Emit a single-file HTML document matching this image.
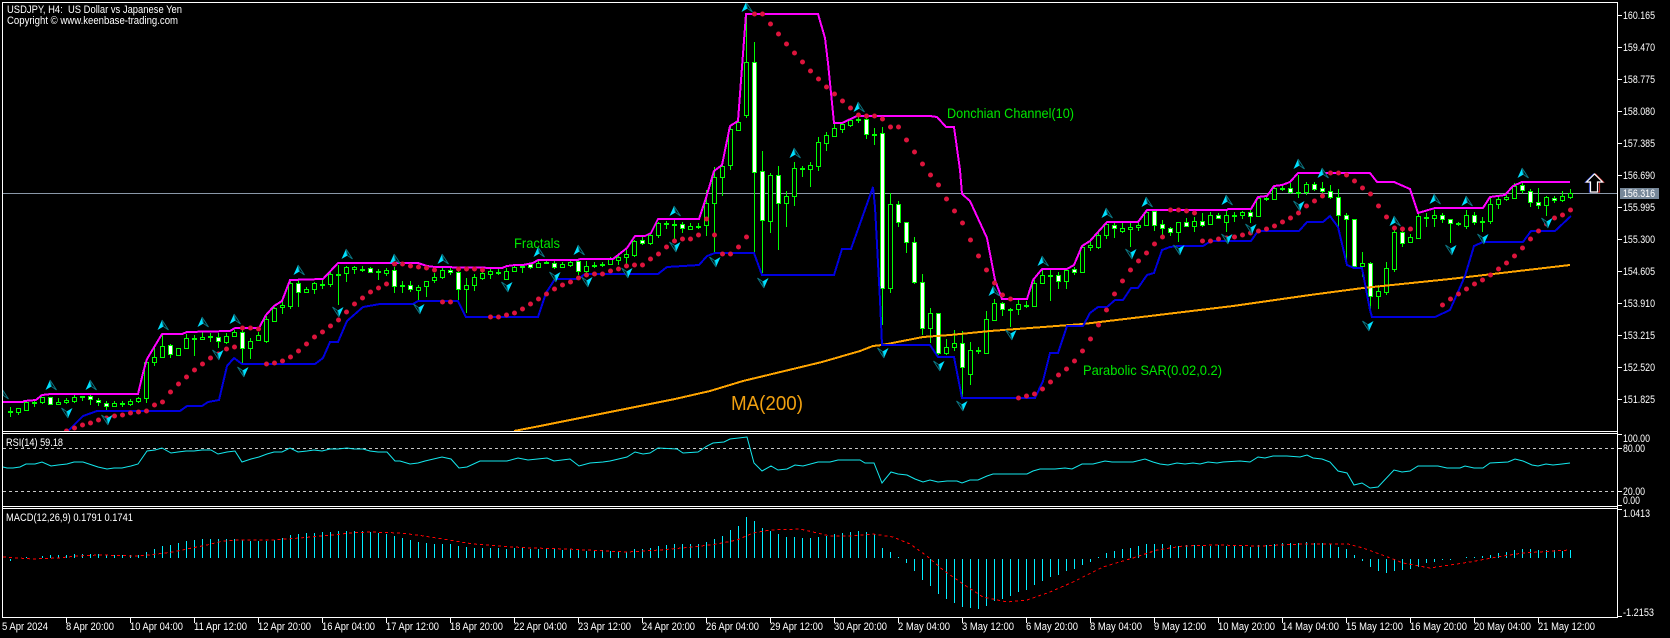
<!DOCTYPE html>
<html lang="en"><head><meta charset="utf-8"><title>USDJPY H4</title>
<style>
html,body{margin:0;padding:0;background:#000;width:1670px;height:638px;overflow:hidden}
svg{display:block}
text{font-family:"Liberation Sans",sans-serif;font-size:11px;fill:#fff}
.g{font-size:14px;fill:#00e800}
</style></head><body>
<svg xmlns="http://www.w3.org/2000/svg" width="1670" height="638" viewBox="0 0 1670 638">
<defs>
<clipPath id="m"><rect x="3" y="3" width="1614" height="428"/></clipPath>
<g id="u"><path d="M-1-5-5.5 5 .5 1.5z" fill="#00e0ff"/><path d="M-1-5 .5 1.5 5.5 5z" fill="#000" stroke="#0b7480"/></g>
<g id="d"><use href="#u" transform="rotate(180)"/></g>
</defs>
<rect width="1670" height="638" fill="#000"/>
<!-- panel frames -->
<g fill="none" stroke="#fff" stroke-width="1" shape-rendering="crispEdges">
<path d="M2.5 2.5H1617.5V617.5H2.5ZM2.5 431.5H1617.5M2.5 433.5H1617.5M2.5 506.5H1617.5M2.5 508.5H1617.5"/>
<path d="M1617 15.500h5M1617 47.500h5M1617 79.500h5M1617 111.500h5M1617 143.500h5M1617 175.500h5M1617 207.500h5M1617 239.500h5M1617 271.500h5M1617 303.500h5M1617 335.500h5M1617 367.500h5M1617 399.500h5M1617 434.500h5M1617 448.500h5M1617 491.500h5M1617 505.500h5M1617 509.500h5M1617 616.500h5"/>
<path d="M66.500 618v5M130.500 618v5M194.500 618v5M258.500 618v5M322.500 618v5M386.500 618v5M450.500 618v5M514.500 618v5M578.500 618v5M642.500 618v5M706.500 618v5M770.500 618v5M834.500 618v5M898.500 618v5M962.500 618v5M1026.500 618v5M1090.500 618v5M1154.500 618v5M1218.500 618v5M1282.500 618v5M1346.500 618v5M1410.500 618v5M1474.500 618v5M1538.500 618v5"/>
</g>
<!-- current price line -->
<path d="M3 193.500H1617" stroke="#8a98a8" stroke-width="1" shape-rendering="crispEdges"/>
<g clip-path="url(#m)">
<!-- wicks -->
<path shape-rendering="crispEdges" fill="none" stroke="#0f0" stroke-width="1" d="M10.500 407V417M18.500 408V415M26.500 402V410M34.500 401V407M42.500 397V404M50.500 397V405M58.500 398V405M66.500 398V404M74.500 395V403M82.500 396V401M90.500 395V405M98.500 398V406M106.500 401V410M114.500 401V407M122.500 401V407M130.500 399V406M138.500 397V403M146.500 360V403M154.500 348V366M162.500 335V358M170.500 344V358M178.500 348V356M186.500 334V348M194.500 335V356M202.500 332V340M210.500 333V342M218.500 333V348M226.500 333V344M234.500 330V336M242.500 330V363M250.500 338V359M258.500 332V341M266.500 316V343M274.500 307V322M282.500 301V314M290.500 280V309M298.500 280V307M306.500 287V293M314.500 282V294M322.500 280V289M330.500 272V287M338.500 265V305M346.500 266V282M354.500 266V274M362.500 266V272M370.500 267V273M378.500 269V280M386.500 268V276M394.500 267V293M402.500 281V293M410.500 281V292M418.500 285V302M426.500 281V297M434.500 273V283M442.500 268V279M450.500 268V275M458.500 268V300M466.500 278V313M474.500 274V291M482.500 272V280M490.500 269V279M498.500 269V275M506.500 268V280M514.500 264V272M522.500 264V273M530.500 263V269M538.500 261V268M546.500 260V264M554.500 261V269M562.500 262V268M570.500 260V267M578.500 259V275M586.500 261V274M594.500 262V268M602.500 262V267M610.500 257V264M618.500 255V265M626.500 248V265M634.500 240V257M642.500 237V245M650.500 233V245M658.500 222V238M666.500 221V229M674.500 220V240M682.500 222V233M690.500 223V230M698.500 223V229M706.500 190V236M714.500 167V253M722.500 163V196M730.500 125V170M738.500 120V130M746.500 14V118M754.500 42V253M762.500 151V273M770.500 173V233M778.500 166V250M786.500 191V227M794.500 162V206M802.500 166V177M810.500 162V187M818.500 137V171M826.500 132V151M834.500 123V137M842.500 123V133M850.500 118V127M858.500 115V123M866.500 117V139M874.500 128V145M882.500 127V325M890.500 193V293M898.500 201V227M906.500 222V253M914.500 237V284M922.500 274V335M930.500 308V343M938.500 313V355M946.500 339V355M954.500 330V351M962.500 331V397M970.500 342V385M978.500 347V354M986.500 311V354M994.500 299V321M1002.500 302V316M1010.500 308V327M1018.500 300V315M1026.500 301V308M1034.500 280V307M1042.500 270V284M1050.500 270V301M1058.500 272V289M1066.500 269V289M1074.500 267V275M1082.500 245V273M1090.500 240V251M1098.500 230V249M1106.500 222V239M1114.500 222V238M1122.500 223V233M1130.500 222V247M1138.500 221V231M1146.500 210V225M1154.500 210V231M1162.500 220V239M1170.500 227V236M1178.500 222V242M1186.500 218V227M1194.500 217V232M1202.500 213V227M1210.500 212V225M1218.500 213V219M1226.500 211V232M1234.500 212V222M1242.500 211V219M1250.500 208V223M1258.500 197V216M1266.500 195V201M1274.500 186V200M1282.500 186V191M1290.500 183V194M1298.500 175V198M1306.500 182V195M1314.500 182V191M1322.500 182V193M1330.500 185V199M1338.500 189V227M1346.500 213V262M1354.500 219V267M1362.500 252V277M1370.500 262V310M1378.500 285V309M1386.500 262V295M1394.500 227V272M1402.500 228V247M1410.500 234V243M1418.500 213V239M1426.500 213V227M1434.500 210V227M1442.500 213V223M1450.500 219V243M1458.500 222V226M1466.500 210V229M1474.500 212V225M1482.500 217V232M1490.500 198V224M1498.500 197V209M1506.500 195V201M1514.500 183V198M1522.500 182V194M1530.500 189V207M1538.500 188V209M1546.500 196V216M1554.500 196V203M1562.500 191V202M1570.500 189V199"/>
<!-- bull bodies -->
<path shape-rendering="crispEdges" fill="#000" stroke="#0f0" stroke-width="1" d="M8.500 411.500h4v1h-4zM16.500 408.500h4v4h-4zM24.500 402.500h4v8h-4zM32.500 402.500h4v1h-4zM40.500 397.500h4v5h-4zM56.500 402.500h4v2h-4zM64.500 400.500h4v2h-4zM72.500 397.500h4v4h-4zM80.500 396.500h4v1h-4zM112.500 403.500h4v3h-4zM120.500 403.500h4v1h-4zM128.500 401.500h4v3h-4zM136.500 398.500h4v3h-4zM144.500 362.500h4v36h-4zM152.500 357.500h4v5h-4zM160.500 346.500h4v11h-4zM176.500 348.500h4v7h-4zM184.500 338.500h4v10h-4zM192.500 338.500h4v1h-4zM200.500 337.500h4v2h-4zM208.500 336.500h4v1h-4zM224.500 336.500h4v6h-4zM232.500 332.500h4v4h-4zM248.500 341.500h4v7h-4zM256.500 335.500h4v5h-4zM264.500 319.500h4v22h-4zM272.500 308.500h4v13h-4zM280.500 305.500h4v2h-4zM288.500 283.500h4v23h-4zM304.500 289.500h4v3h-4zM312.500 283.500h4v6h-4zM320.500 284.500h4v1h-4zM328.500 274.500h4v10h-4zM336.500 274.500h4v1h-4zM344.500 267.500h4v6h-4zM352.500 267.500h4v2h-4zM360.500 269.500h4v1h-4zM376.500 271.500h4v1h-4zM384.500 270.500h4v3h-4zM400.500 285.500h4v1h-4zM416.500 287.500h4v3h-4zM424.500 281.500h4v5h-4zM432.500 277.500h4v3h-4zM440.500 270.500h4v7h-4zM464.500 285.500h4v4h-4zM472.500 277.500h4v8h-4zM480.500 273.500h4v5h-4zM488.500 271.500h4v3h-4zM496.500 272.500h4v1h-4zM504.500 271.500h4v8h-4zM512.500 267.500h4v4h-4zM520.500 266.500h4v1h-4zM536.500 263.500h4v4h-4zM544.500 262.500h4v1h-4zM560.500 264.500h4v3h-4zM568.500 262.500h4v3h-4zM584.500 266.500h4v5h-4zM592.500 265.500h4v1h-4zM600.500 264.500h4v1h-4zM608.500 259.500h4v5h-4zM616.500 257.500h4v3h-4zM624.500 254.500h4v3h-4zM632.500 241.500h4v14h-4zM648.500 235.500h4v8h-4zM656.500 223.500h4v12h-4zM664.500 223.500h4v1h-4zM672.500 224.500h4v1h-4zM688.500 226.500h4v3h-4zM696.500 226.500h4v1h-4zM704.500 203.500h4v22h-4zM712.500 177.500h4v26h-4zM720.500 166.500h4v11h-4zM728.500 129.500h4v36h-4zM736.500 122.500h4v8h-4zM744.500 62.500h4v53h-4zM768.500 175.500h4v46h-4zM784.500 196.500h4v7h-4zM792.500 168.500h4v28h-4zM800.500 168.500h4v1h-4zM808.500 165.500h4v4h-4zM816.500 142.500h4v24h-4zM824.500 135.500h4v8h-4zM832.500 128.500h4v8h-4zM840.500 124.500h4v5h-4zM848.500 120.500h4v5h-4zM856.500 119.500h4v1h-4zM872.500 134.500h4v1h-4zM888.500 204.500h4v84h-4zM928.500 313.500h4v15h-4zM944.500 347.500h4v6h-4zM952.500 343.500h4v4h-4zM968.500 350.500h4v24h-4zM976.500 350.500h4v1h-4zM984.500 319.500h4v34h-4zM992.500 303.500h4v17h-4zM1008.500 309.500h4v1h-4zM1016.500 304.500h4v5h-4zM1024.500 305.500h4v1h-4zM1032.500 283.500h4v23h-4zM1040.500 275.500h4v8h-4zM1048.500 275.500h4v1h-4zM1064.500 270.500h4v11h-4zM1080.500 247.500h4v25h-4zM1088.500 245.500h4v2h-4zM1096.500 235.500h4v12h-4zM1104.500 224.500h4v11h-4zM1120.500 228.500h4v3h-4zM1128.500 227.500h4v2h-4zM1136.500 225.500h4v2h-4zM1144.500 212.500h4v13h-4zM1176.500 222.500h4v10h-4zM1192.500 221.500h4v5h-4zM1208.500 215.500h4v9h-4zM1224.500 215.500h4v7h-4zM1232.500 215.500h4v1h-4zM1240.500 212.500h4v3h-4zM1256.500 198.500h4v18h-4zM1264.500 198.500h4v1h-4zM1272.500 188.500h4v11h-4zM1280.500 188.500h4v1h-4zM1296.500 192.500h4v1h-4zM1304.500 184.500h4v8h-4zM1360.500 263.500h4v3h-4zM1376.500 291.500h4v5h-4zM1384.500 268.500h4v24h-4zM1392.500 232.500h4v37h-4zM1408.500 237.500h4v5h-4zM1416.500 216.500h4v22h-4zM1424.500 217.500h4v1h-4zM1432.500 215.500h4v3h-4zM1456.500 223.500h4v1h-4zM1464.500 215.500h4v11h-4zM1480.500 221.500h4v1h-4zM1488.500 204.500h4v17h-4zM1496.500 199.500h4v5h-4zM1504.500 197.500h4v2h-4zM1512.500 186.500h4v12h-4zM1544.500 197.500h4v8h-4zM1560.500 196.500h4v4h-4zM1568.500 193.500h4v4h-4z"/>
<!-- bear bodies -->
<path shape-rendering="crispEdges" fill="#fff" stroke="#0f0" stroke-width="1" d="M48.500 397.500h4v7h-4zM88.500 396.500h4v3h-4zM96.500 400.500h4v2h-4zM104.500 403.500h4v3h-4zM168.500 345.500h4v9h-4zM216.500 337.500h4v4h-4zM240.500 332.500h4v16h-4zM296.500 283.500h4v9h-4zM368.500 268.500h4v4h-4zM392.500 270.500h4v16h-4zM408.500 285.500h4v4h-4zM448.500 270.500h4v2h-4zM456.500 272.500h4v17h-4zM528.500 264.500h4v3h-4zM552.500 263.500h4v4h-4zM576.500 261.500h4v10h-4zM640.500 240.500h4v3h-4zM680.500 224.500h4v4h-4zM752.500 62.500h4v110h-4zM760.500 171.500h4v49h-4zM776.500 175.500h4v28h-4zM864.500 119.500h4v15h-4zM880.500 133.500h4v155h-4zM896.500 204.500h4v18h-4zM904.500 222.500h4v20h-4zM912.500 242.500h4v40h-4zM920.500 282.500h4v46h-4zM936.500 313.500h4v40h-4zM960.500 343.500h4v24h-4zM1000.500 303.500h4v6h-4zM1056.500 275.500h4v6h-4zM1072.500 269.500h4v3h-4zM1112.500 225.500h4v3h-4zM1152.500 211.500h4v14h-4zM1160.500 224.500h4v4h-4zM1168.500 228.500h4v4h-4zM1184.500 222.500h4v4h-4zM1200.500 221.500h4v4h-4zM1216.500 215.500h4v3h-4zM1248.500 212.500h4v4h-4zM1288.500 188.500h4v4h-4zM1312.500 184.500h4v5h-4zM1320.500 188.500h4v3h-4zM1328.500 191.500h4v6h-4zM1336.500 197.500h4v18h-4zM1344.500 215.500h4v4h-4zM1352.500 219.500h4v47h-4zM1368.500 263.500h4v33h-4zM1400.500 232.500h4v11h-4zM1440.500 215.500h4v4h-4zM1448.500 219.500h4v4h-4zM1472.500 215.500h4v7h-4zM1520.500 185.500h4v5h-4zM1528.500 191.500h4v11h-4zM1536.500 202.500h4v3h-4zM1552.500 198.500h4v2h-4z"/>
<!-- MA200 -->
<polyline fill="none" stroke="#ffa500" stroke-width="2" shape-rendering="crispEdges" points="514,431 540,426 600,414 675,399 710,391 743,381 822,362 860,351 873,346 882,345 923,337 950,335 990,331 1083,324 1150,316 1233,306 1310,295 1363,288 1450,279 1570,265"/>
<!-- Donchian lower -->
<polyline fill="none" stroke="#0000dd" stroke-width="2" shape-rendering="crispEdges" points="68,431 83,416 97,411 180,411 187,406 202,406 208,402 219,400 227,366 234,358 242,364 315,364 323,358 330,342 338,342 347,321 363,307 380,304 413,304 418,301 458,301 466,317 538,317 546,293 555,279 578,279 585,274 658,274 667,267 699,265 707,256 715,253 754,253 762,275 834,275 842,249 851,249 873,187 875,207 880,300 882,345 930,345 938,357 954,357 962,398 1035,398 1043,381 1050,353 1058,353 1067,326 1083,326 1090,313 1098,307 1107,307 1115,300 1123,300 1131,288 1138,288 1147,275 1154,273 1162,250 1170,247 1178,246 1203,246 1211,241 1251,241 1258,231 1299,231 1307,222 1323,222 1330,216 1338,227 1347,265 1354,268 1362,268 1370,310 1372,317 1435,317 1450,310 1465,276 1474,246 1483,242 1523,242 1531,231 1555,231 1571,216"/>
<!-- Donchian upper -->
<polyline fill="none" stroke="#ff00ff" stroke-width="2" shape-rendering="crispEdges" points="3,402 23,402 24,401 36,400 42,395 51,394 138,394 143,373 147,359 162,334 182,334 187,332 230,331 235,328 259,328 266,315 274,306 282,301 290,280 323,279 338,263 418,263 427,266 435,267 502,268 507,266 515,265 523,265 533,263 538,260 578,260 580,259 613,259 627,248 635,236 645,236 651,233 658,219 699,219 706,198 714,171 722,165 730,126 738,121 742,67 746,14 818,14 825,38 828,63 834,123 842,123 857,116 930,116 937,117 946,127 954,127 960,170 962,194 970,201 987,238 995,280 1002,299 1027,299 1033,280 1042,269 1067,269 1074,265 1082,246 1090,241 1107,222 1138,222 1147,210 1227,210 1228,209 1251,209 1258,197 1267,196 1274,186 1282,185 1290,182 1298,173 1370,173 1377,182 1394,182 1410,189 1418,213 1435,208 1483,208 1490,197 1505,195 1513,186 1522,182 1570,182"/>
<!-- Parabolic SAR -->
<path fill="none" stroke="#dc143c" stroke-width="5" stroke-linecap="round" d="M66.500 431h.01M74.500 428h.01M82.500 425h.01M90.500 423h.01M98.500 420h.01M106.500 418h.01M114.500 416h.01M122.500 415h.01M130.500 413h.01M138.500 412h.01M146.500 411h.01M154.500 405h.01M162.500 402h.01M170.500 392h.01M178.500 384h.01M186.500 377h.01M194.500 370h.01M202.500 364h.01M210.500 358h.01M218.500 354h.01M226.500 349h.01M234.500 347h.01M242.500 328h.01M250.500 328h.01M258.500 329h.01M266.500 364h.01M274.500 363h.01M282.500 361h.01M290.500 357h.01M298.500 351h.01M306.500 344h.01M314.500 337h.01M322.500 332h.01M330.500 326h.01M338.500 320h.01M346.500 312h.01M354.500 304h.01M362.500 298h.01M370.500 292h.01M378.500 288h.01M386.500 284h.01M394.500 264h.01M402.500 264h.01M410.500 266h.01M418.500 267h.01M426.500 268h.01M434.500 270h.01M442.500 302h.01M450.500 302h.01M458.500 269h.01M466.500 269h.01M474.500 269h.01M482.500 270h.01M490.500 317h.01M498.500 317h.01M506.500 315h.01M514.500 313h.01M522.500 309h.01M530.500 304h.01M538.500 299h.01M546.500 294h.01M554.500 289h.01M562.500 285h.01M570.500 282h.01M578.500 278h.01M586.500 275h.01M594.500 274h.01M602.500 274h.01M610.500 271h.01M618.500 269h.01M626.500 266h.01M634.500 265h.01M642.500 265h.01M650.500 259h.01M658.500 254h.01M666.500 247h.01M674.500 241h.01M682.500 239h.01M690.500 239h.01M698.500 235h.01M706.500 219h.01M714.500 235h.01M722.500 254h.01M730.500 254h.01M738.500 247h.01M746.500 237h.01M754.500 14h.01M762.500 14h.01M770.500 24h.01M778.500 34h.01M786.500 44h.01M794.500 53h.01M802.500 62h.01M810.500 71h.01M818.500 79h.01M826.500 87h.01M834.500 94h.01M842.500 101h.01M850.500 108h.01M858.500 115h.01M866.500 116h.01M874.500 116h.01M882.500 119h.01M890.500 127h.01M898.500 127h.01M906.500 140h.01M914.500 152h.01M922.500 164h.01M930.500 175h.01M938.500 185h.01M946.500 199h.01M954.500 211h.01M962.500 223h.01M970.500 240h.01M978.500 256h.01M986.500 270h.01M994.500 283h.01M1002.500 295h.01M1010.500 299h.01M1018.500 398h.01M1026.500 396h.01M1034.500 394h.01M1042.500 389h.01M1050.500 382h.01M1058.500 375h.01M1066.500 369h.01M1074.500 361h.01M1082.500 351h.01M1090.500 339h.01M1098.500 325h.01M1106.500 310h.01M1114.500 294h.01M1122.500 281h.01M1130.500 270h.01M1138.500 261h.01M1146.500 253h.01M1154.500 244h.01M1162.500 237h.01M1170.500 210h.01M1178.500 210h.01M1186.500 211h.01M1194.500 213h.01M1202.500 241h.01M1210.500 241h.01M1218.500 239h.01M1226.500 238h.01M1234.500 237h.01M1242.500 235h.01M1250.500 233h.01M1258.500 231h.01M1266.500 229h.01M1274.500 226h.01M1282.500 222h.01M1290.500 218h.01M1298.500 213h.01M1306.500 206h.01M1314.500 201h.01M1322.500 196h.01M1330.500 173h.01M1338.500 173h.01M1346.500 175h.01M1354.500 181h.01M1362.500 188h.01M1370.500 194h.01M1378.500 206h.01M1386.500 217h.01M1394.500 228h.01M1402.500 229h.01M1410.500 229h.01M1442.500 305h.01M1450.500 299h.01M1458.500 294h.01M1466.500 289h.01M1474.500 284h.01M1482.500 280h.01M1490.500 275h.01M1498.500 269h.01M1506.500 263h.01M1514.500 256h.01M1522.500 248h.01M1530.500 239h.01M1538.500 231h.01M1546.500 224h.01M1554.500 218h.01M1562.500 215h.01M1570.500 210h.01"/>
<!-- Fractals up -->
<use href="#u" x="3" y="394"/><use href="#u" x="51" y="385"/><use href="#u" x="91" y="385"/><use href="#u" x="163" y="325"/><use href="#u" x="203" y="322"/><use href="#u" x="235" y="319"/><use href="#u" x="299" y="270"/><use href="#u" x="347" y="254"/><use href="#u" x="395" y="259"/><use href="#u" x="443" y="259"/><use href="#u" x="539" y="252"/><use href="#u" x="579" y="250"/><use href="#u" x="675" y="211"/><use href="#u" x="747" y="7"/><use href="#u" x="795" y="153"/><use href="#u" x="859" y="107"/><use href="#u" x="994" y="291"/><use href="#u" x="1043" y="261"/><use href="#u" x="1107" y="213"/><use href="#u" x="1147" y="202"/><use href="#u" x="1227" y="200"/><use href="#u" x="1299" y="164"/><use href="#u" x="1323" y="173"/><use href="#u" x="1395" y="221"/><use href="#u" x="1435" y="199"/><use href="#u" x="1467" y="201"/><use href="#u" x="1523" y="173"/>
<!-- Fractals down -->
<use href="#d" x="67" y="413"/><use href="#d" x="107" y="420"/><use href="#d" x="218" y="355"/><use href="#d" x="243" y="372"/><use href="#d" x="338" y="312"/><use href="#d" x="419" y="309"/><use href="#d" x="507" y="287"/><use href="#d" x="555" y="277"/><use href="#d" x="587" y="282"/><use href="#d" x="627" y="273"/><use href="#d" x="675" y="247"/><use href="#d" x="715" y="262"/><use href="#d" x="763" y="283"/><use href="#d" x="883" y="353"/><use href="#d" x="939" y="366"/><use href="#d" x="962" y="406"/><use href="#d" x="1011" y="335"/><use href="#d" x="1131" y="254"/><use href="#d" x="1179" y="250"/><use href="#d" x="1227" y="239"/><use href="#d" x="1251" y="229"/><use href="#d" x="1299" y="206"/><use href="#d" x="1368" y="326"/><use href="#d" x="1451" y="250"/><use href="#d" x="1483" y="239"/><use href="#d" x="1547" y="223"/>
</g>
<!-- up arrow signal -->
<g fill="none" stroke-width="1.2">
<path stroke="#2a3fc0" d="M1593.500 174L1585.500 182H1589.500V192H1596.500V182H1601.500Z"/>
<path stroke="#c02a2a" d="M1595.500 174L1603.500 182H1599.500V192H1592.500V182H1587.500Z"/>
<path stroke="#fff" fill="#000" d="M1594.500 174L1586.500 182H1590.500V192H1597.500V182H1602.500Z"/>
</g>
<!-- RSI -->
<path d="M3 448.500H1617M3 491.500H1617" stroke="#c8c8c8" stroke-width="1" stroke-dasharray="3 3" shape-rendering="crispEdges"/>
<polyline fill="none" stroke="#14e8ee" stroke-width="1" points="3,467 7,468 13,468 20,467 26,464 35,464 42,462 51,466 58,465 67,464 74,462 83,462 92,465 98,467 107,469 114,468 122,468 131,466 138,464 147,451 155,450 162,448 171,453 178,452 186,451 194,451 202,450 211,450 218,454 227,452 235,451 242,462 251,459 259,457 267,454 274,452 282,452 290,448 298,452 307,451 314,450 322,451 330,449 338,449 347,448 354,449 363,449 370,451 378,452 387,452 395,461 400,461 410,464 418,463 425,461 442,457 451,459 459,468 467,467 480,461 507,461 518,458 528,460 547,458 554,461 570,459 579,466 590,463 603,462 610,461 627,457 635,452 643,454 650,453 658,448 677,449 683,453 698,452 707,446 713,443 724,442 730,439 747,437 754,463 762,471 771,466 778,470 787,469 795,465 803,466 818,462 830,462 838,460 860,460 865,463 874,463 882,483 891,472 898,474 907,475 915,479 923,482 930,480 938,482 947,481 957,481 962,483 970,480 978,480 987,476 993,474 1027,474 1033,471 1040,469 1055,469 1065,468 1072,469 1082,464 1093,464 1105,461 1112,462 1133,462 1145,459 1153,462 1160,464 1168,465 1177,463 1185,464 1193,463 1200,464 1208,462 1217,463 1223,462 1240,461 1250,462 1258,457 1265,458 1273,456 1287,456 1300,457 1307,455 1313,458 1322,459 1330,462 1338,471 1347,473 1354,485 1362,483 1370,488 1378,487 1394,470 1402,472 1410,471 1418,466 1438,466 1447,468 1460,468 1465,466 1474,468 1483,468 1490,463 1508,462 1515,459 1523,461 1532,465 1538,466 1546,464 1553,465 1562,464 1570,463"/>
<!-- MACD histogram -->
<path shape-rendering="crispEdges" fill="none" stroke="#00eeff" stroke-width="1" d="M10.500 559V561M26.500 557V558M42.500 556V558M50.500 555V558M58.500 555V558M66.500 555V558M74.500 554V558M82.500 554V558M90.500 554V558M98.500 554V558M106.500 555V558M114.500 555V558M122.500 555V558M130.500 555V558M138.500 555V558M146.500 552V558M154.500 549V558M162.500 546V558M170.500 545V558M178.500 543V558M186.500 541V558M194.500 540V558M202.500 539V558M210.500 539V558M218.500 539V558M226.500 539V558M234.500 539V558M242.500 540V558M250.500 541V558M258.500 541V558M266.500 541V558M274.500 540V558M282.500 538V558M290.500 535V558M298.500 534V558M306.500 533V558M314.500 533V558M322.500 532V558M330.500 532V558M338.500 531V558M346.500 531V558M354.500 531V558M362.500 531V558M370.500 532V558M378.500 533V558M386.500 534V558M394.500 536V558M402.500 538V558M410.500 540V558M418.500 542V558M426.500 543V558M434.500 544V558M442.500 544V558M450.500 544V558M458.500 546V558M466.500 547V558M474.500 548V558M482.500 548V558M490.500 548V558M498.500 548V558M506.500 549V558M514.500 548V558M522.500 548V558M530.500 549V558M538.500 549V558M546.500 548V558M554.500 549V558M562.500 550V558M570.500 549V558M578.500 550V558M586.500 551V558M594.500 551V558M602.500 550V558M610.500 551V558M618.500 551V558M626.500 552V558M634.500 549V558M642.500 549V558M650.500 548V558M658.500 546V558M666.500 545V558M674.500 544V558M682.500 544V558M690.500 544V558M698.500 544V558M706.500 542V558M714.500 539V558M722.500 536V558M730.500 530V558M738.500 526V558M746.500 517V558M754.500 521V558M762.500 528V558M770.500 531V558M778.500 534V558M786.500 537V558M794.500 537V558M802.500 538V558M810.500 538V558M818.500 537V558M826.500 536V558M834.500 534V558M842.500 533V558M850.500 532V558M858.500 531V558M866.500 532V558M874.500 534V558M882.500 548V558M890.500 552V558M898.500 557V558M906.500 559V563M914.500 559V571M922.500 559V580M930.500 559V586M938.500 559V594M946.500 559V599M954.500 559V603M962.500 559V607M970.500 559V608M978.500 559V609M986.500 559V606M994.500 559V601M1002.500 559V599M1010.500 559V596M1018.500 559V592M1026.500 559V590M1034.500 559V585M1042.500 559V581M1050.500 559V577M1058.500 559V575M1066.500 559V571M1074.500 559V569M1082.500 559V565M1090.500 559V562M1098.500 557V558M1106.500 553V558M1114.500 551V558M1122.500 549V558M1130.500 548V558M1138.500 546V558M1146.500 544V558M1154.500 544V558M1162.500 544V558M1170.500 545V558M1178.500 546V558M1186.500 545V558M1194.500 545V558M1202.500 546V558M1210.500 546V558M1218.500 545V558M1226.500 546V558M1234.500 546V558M1242.500 546V558M1250.500 547V558M1258.500 545V558M1266.500 545V558M1274.500 544V558M1282.500 543V558M1290.500 543V558M1298.500 543V558M1306.500 542V558M1314.500 543V558M1322.500 543V558M1330.500 544V558M1338.500 547V558M1346.500 549V558M1354.500 555V558M1362.500 559V561M1370.500 559V567M1378.500 559V571M1386.500 559V573M1394.500 559V571M1402.500 559V570M1410.500 559V569M1418.500 559V567M1426.500 559V563M1434.500 559V562M1442.500 559V560M1450.500 559V560M1466.500 557V558M1474.500 557V558M1482.500 556V558M1490.500 555V558M1498.500 553V558M1506.500 552V558M1514.500 550V558M1522.500 549V558M1530.500 549V558M1538.500 550V558M1546.500 550V558M1554.500 550V558M1562.500 551V558M1570.500 550V558"/>
<polyline fill="none" stroke="#ff0000" stroke-width="1" stroke-dasharray="3 3" shape-rendering="crispEdges" points="3,557 33,559 58,558 77,556 100,555 138,556 157,554 173,552 187,549 207,545 223,541 240,540 273,540 300,538 333,535 350,533 370,532 400,533 417,535 443,539 473,544 513,547 533,548 567,549 627,552 660,550 693,547 717,544 737,540 753,533 770,530 800,529 813,532 830,536 850,536 873,534 893,537 910,544 927,556 943,570 963,584 983,597 1007,602 1027,600 1050,592 1073,582 1103,567 1133,558 1157,550 1183,546 1217,545 1260,546 1303,544 1348,544 1363,548 1385,556 1403,563 1430,568 1450,565 1470,562 1497,557 1523,553 1570,550"/>
<!-- Text labels -->
<text x="7" y="13" textLength="175" lengthAdjust="spacingAndGlyphs">USDJPY, H4:&#160;&#160;US Dollar vs Japanese Yen</text>
<text x="7" y="24" textLength="171" lengthAdjust="spacingAndGlyphs">Copyright © www.keenbase-trading.com</text>
<text class="g" x="514" y="248" textLength="46" lengthAdjust="spacingAndGlyphs">Fractals</text>
<text class="g" x="947" y="118" textLength="127" lengthAdjust="spacingAndGlyphs">Donchian Channel(10)</text>
<text class="g" x="1083" y="375" textLength="139" lengthAdjust="spacingAndGlyphs">Parabolic SAR(0.02,0.2)</text>
<text x="731" y="410" textLength="72" lengthAdjust="spacingAndGlyphs" style="font-size:20px;fill:#f0a010">MA(200)</text>
<text x="6" y="446" textLength="57" lengthAdjust="spacingAndGlyphs">RSI(14) 59.18</text>
<text x="6" y="521" textLength="127" lengthAdjust="spacingAndGlyphs">MACD(12,26,9) 0.1791 0.1741</text>
<!-- price axis -->
<g>
<text x="1623" y="19" textLength="32" lengthAdjust="spacingAndGlyphs">160.165</text>
<text x="1623" y="51" textLength="32" lengthAdjust="spacingAndGlyphs">159.470</text>
<text x="1623" y="83" textLength="32" lengthAdjust="spacingAndGlyphs">158.775</text>
<text x="1623" y="115" textLength="32" lengthAdjust="spacingAndGlyphs">158.080</text>
<text x="1623" y="147" textLength="32" lengthAdjust="spacingAndGlyphs">157.385</text>
<text x="1623" y="179" textLength="32" lengthAdjust="spacingAndGlyphs">156.690</text>
<text x="1623" y="211" textLength="32" lengthAdjust="spacingAndGlyphs">155.995</text>
<text x="1623" y="243" textLength="32" lengthAdjust="spacingAndGlyphs">155.300</text>
<text x="1623" y="275" textLength="32" lengthAdjust="spacingAndGlyphs">154.605</text>
<text x="1623" y="307" textLength="32" lengthAdjust="spacingAndGlyphs">153.910</text>
<text x="1623" y="339" textLength="32" lengthAdjust="spacingAndGlyphs">153.215</text>
<text x="1623" y="371" textLength="32" lengthAdjust="spacingAndGlyphs">152.520</text>
<text x="1623" y="403" textLength="32" lengthAdjust="spacingAndGlyphs">151.825</text>
<rect x="1620" y="188" width="39" height="11" fill="#778899"/>
<text x="1623" y="197" textLength="32" lengthAdjust="spacingAndGlyphs">156.316</text>
<text x="1623" y="442" textLength="27" lengthAdjust="spacingAndGlyphs">100.00</text>
<text x="1623" y="452" textLength="22" lengthAdjust="spacingAndGlyphs">80.00</text>
<text x="1623" y="495" textLength="22" lengthAdjust="spacingAndGlyphs">20.00</text>
<text x="1623" y="504" textLength="17" lengthAdjust="spacingAndGlyphs">0.00</text>
<text x="1623" y="517" textLength="27" lengthAdjust="spacingAndGlyphs">1.0413</text>
<text x="1623" y="616" textLength="31" lengthAdjust="spacingAndGlyphs">-1.2153</text>
</g>
<!-- time axis -->
<g>
<text x="2" y="630" textLength="46" lengthAdjust="spacingAndGlyphs">5 Apr 2024</text>
<text x="66" y="630" textLength="48" lengthAdjust="spacingAndGlyphs">8 Apr 20:00</text>
<text x="130" y="630" textLength="53" lengthAdjust="spacingAndGlyphs">10 Apr 04:00</text>
<text x="194" y="630" textLength="53" lengthAdjust="spacingAndGlyphs">11 Apr 12:00</text>
<text x="258" y="630" textLength="53" lengthAdjust="spacingAndGlyphs">12 Apr 20:00</text>
<text x="322" y="630" textLength="53" lengthAdjust="spacingAndGlyphs">16 Apr 04:00</text>
<text x="386" y="630" textLength="53" lengthAdjust="spacingAndGlyphs">17 Apr 12:00</text>
<text x="450" y="630" textLength="53" lengthAdjust="spacingAndGlyphs">18 Apr 20:00</text>
<text x="514" y="630" textLength="53" lengthAdjust="spacingAndGlyphs">22 Apr 04:00</text>
<text x="578" y="630" textLength="53" lengthAdjust="spacingAndGlyphs">23 Apr 12:00</text>
<text x="642" y="630" textLength="53" lengthAdjust="spacingAndGlyphs">24 Apr 20:00</text>
<text x="706" y="630" textLength="53" lengthAdjust="spacingAndGlyphs">26 Apr 04:00</text>
<text x="770" y="630" textLength="53" lengthAdjust="spacingAndGlyphs">29 Apr 12:00</text>
<text x="834" y="630" textLength="53" lengthAdjust="spacingAndGlyphs">30 Apr 20:00</text>
<text x="898" y="630" textLength="52" lengthAdjust="spacingAndGlyphs">2 May 04:00</text>
<text x="962" y="630" textLength="52" lengthAdjust="spacingAndGlyphs">3 May 12:00</text>
<text x="1026" y="630" textLength="52" lengthAdjust="spacingAndGlyphs">6 May 20:00</text>
<text x="1090" y="630" textLength="52" lengthAdjust="spacingAndGlyphs">8 May 04:00</text>
<text x="1154" y="630" textLength="52" lengthAdjust="spacingAndGlyphs">9 May 12:00</text>
<text x="1218" y="630" textLength="57" lengthAdjust="spacingAndGlyphs">10 May 20:00</text>
<text x="1282" y="630" textLength="57" lengthAdjust="spacingAndGlyphs">14 May 04:00</text>
<text x="1346" y="630" textLength="57" lengthAdjust="spacingAndGlyphs">15 May 12:00</text>
<text x="1410" y="630" textLength="57" lengthAdjust="spacingAndGlyphs">16 May 20:00</text>
<text x="1474" y="630" textLength="57" lengthAdjust="spacingAndGlyphs">20 May 04:00</text>
<text x="1538" y="630" textLength="57" lengthAdjust="spacingAndGlyphs">21 May 12:00</text>
</g>
</svg>
</body></html>
